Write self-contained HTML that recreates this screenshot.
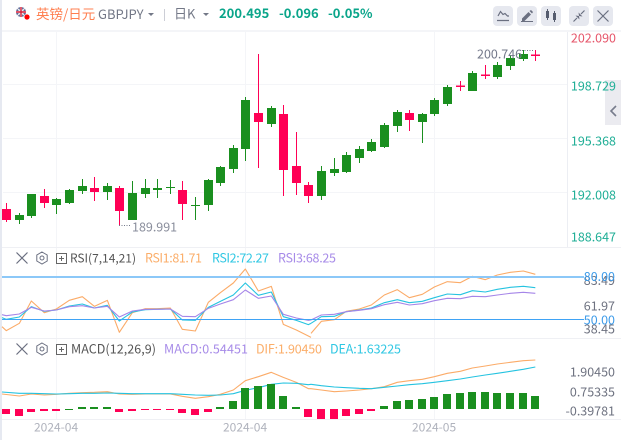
<!DOCTYPE html>
<html><head><meta charset="utf-8"><style>
html,body{margin:0;padding:0;background:#fff;width:621px;height:440px;overflow:hidden}
svg{display:block}
text{font-family:"Noto Sans CJK SC","Liberation Sans",sans-serif;font-size:12px}
.b{font-weight:700;font-size:13px;fill:#0aa58a}
.ax{text-anchor:end}
.l{fill:none;vector-effect:non-scaling-stroke;stroke-width:1.1;stroke-linejoin:round}
.o{stroke:#fbab68}.c{stroke:#25c3e0}.p{stroke:#a585e8}
.ic{fill:none;stroke:#6a6f80;stroke-width:1.2}
</style></head><body>
<svg width="621" height="440" viewBox="0 0 621 440" xmlns="http://www.w3.org/2000/svg">
<rect width="621" height="440" fill="#fff"/>
<rect x="0" y="0" width="2" height="440" fill="#e6e9f1"/>
<!-- grid -->
<g fill="#f4f5f8" shape-rendering="crispEdges">
<rect x="2" y="30" width="619" height="2"/>
<rect x="3" y="84" width="564" height="1"/><rect x="3" y="138" width="564" height="1"/><rect x="3" y="192" width="564" height="1"/>
<rect x="56" y="32" width="1" height="387"/><rect x="245" y="32" width="1" height="387"/><rect x="434" y="32" width="1" height="387"/>
<rect x="567" y="32" width="1" height="215" fill="#eceef3"/>
<rect x="2" y="247" width="619" height="1" fill="#eff0f4"/>
<rect x="2" y="338" width="619" height="1" fill="#eff0f4"/>
<rect x="2" y="419" width="619" height="1" fill="#eff0f4"/>
</g>
<!-- header -->
<circle cx="21" cy="12" r="5" fill="#2b3a7a"/>
<path d="M17 8l8 8M25 8l-8 8" stroke="#eee" stroke-width="1.4"/>
<path d="M21 7v10M16 12h10" stroke="#e8e8e8" stroke-width="2.6"/>
<path d="M21 7v10M16 12h10" stroke="#d8203c" stroke-width="1.4"/>
<circle cx="27" cy="17" r="2.6" fill="#f00"/>
<text x="36" y="19" style="font-size:13.5px" fill="#ff7f50">英镑/日元</text>
<text x="98" y="19" style="font-size:13px" fill="#737887">GBPJPY</text>
<path d="M148 13h6l-3 3z" fill="#737887"/>
<rect x="164" y="9" width="1" height="12" fill="#ccced6"/>
<text x="174" y="18.500" style="font-size:13px" fill="#737887">日K</text>
<path d="M203 13h6l-3 3z" fill="#737887"/>
<text x="219" y="18" class="b">200.495</text>
<text x="279" y="18" class="b">-0.096</text>
<text x="328" y="18" class="b">-0.05%</text>
<!-- toolbar -->
<g fill="#e6e8ef"><rect x="493" y="6" width="20" height="20" rx="4"/><rect x="517" y="6" width="20" height="20" rx="4"/><rect x="541" y="6" width="20" height="20" rx="4"/><rect x="569" y="6" width="20" height="20" rx="4"/><rect x="593" y="6" width="20" height="20" rx="4"/></g>
<path class="ic" d="M498 16l2.500-4.500 2.500 3 2-1 2.500 2.500h1.500M497 20.500h12"/>
<path d="M522 18.500l6.500-6.500 2.500 2.500-6.500 6.500h-2.500z" fill="#6a6f80"/><path d="M529.500 11l1.500-1 2 2-1 1.500z" fill="#6a6f80"/><path d="M521 21.500h12" stroke="#6a6f80" fill="none"/>
<path d="M546 11h3v7h-3zM553 13h3v7h-3z" fill="#555c6e"/><path d="M547.500 9v11M554.500 11v11" stroke="#555c6e" fill="none"/>
<path class="ic" d="M573.500 21.500l3.500-3.500M584.500 10.500l-3.500 3.500"/><path d="M575.500 15.500l3.500 .5 .5 3.500zM582.500 16.500l-3.500-.5-.5-3.500z" fill="#6a6f80"/>
<path class="ic" d="M597.500 10.500l11 11M608.500 10.500l-11 11"/>
<!-- candles -->
<path shape-rendering="crispEdges" fill="#1a8f1f" d="M15 215h9v5h-9zM19 213h1v11h-1zM27 194h9v22h-9zM31 194h1v24h-1zM52 199h9v6h-9zM56 198h1v16h-1zM65 190h9v13h-9zM69 189h1v15h-1zM78 186h9v5h-9zM82 179h1v15h-1zM103 186h9v6h-9zM107 183h1v17h-1zM128 193h9v27h-9zM132 181h1v39h-1zM141 188h9v6h-9zM145 179h1v19h-1zM153 188h9v2h-9zM157 179h1v19h-1zM166 187h9v1h-9zM170 180h1v14h-1zM191 205h9v1h-9zM195 197h1v23h-1zM204 180h9v25h-9zM208 179h1v32h-1zM216 167h9v16h-9zM220 166h1v20h-1zM229 148h9v21h-9zM233 145h1v28h-1zM241 100h9v49h-9zM245 97h1v64h-1zM267 108h9v16h-9zM271 106h1v21h-1zM317 171h9v25h-9zM321 166h1v34h-1zM330 169h9v4h-9zM334 158h1v18h-1zM342 155h9v17h-9zM346 152h1v21h-1zM355 149h9v9h-9zM359 146h1v17h-1zM367 142h9v9h-9zM371 139h1v13h-1zM380 125h9v22h-9zM384 123h1v25h-1zM393 112h9v14h-9zM397 110h1v22h-1zM418 114h9v8h-9zM422 113h1v30h-1zM430 100h9v14h-9zM434 98h1v18h-1zM443 87h9v17h-9zM447 85h1v21h-1zM468 73h9v18h-9zM472 71h1v20h-1zM493 65h9v12h-9zM497 62h1v17h-1zM506 58h9v8h-9zM510 55h1v15h-1zM519 54h9v5h-9zM523 50h1v11h-1z"/>
<path shape-rendering="crispEdges" fill="#ff0055" d="M2 209h9v11h-9zM6 203h1v19h-1zM40 196h9v7h-9zM44 189h1v19h-1zM90 188h9v4h-9zM94 177h1v24h-1zM115 188h9v23h-9zM119 186h1v40h-1zM178 190h9v14h-9zM182 181h1v39h-1zM254 113h9v9h-9zM258 54h1v114h-1zM279 114h9v56h-9zM283 105h1v91h-1zM292 166h9v17h-9zM296 132h1v63h-1zM304 185h9v11h-9zM308 182h1v21h-1zM405 113h9v7h-9zM409 110h1v21h-1zM456 85.500h9v1.500h-9zM460 81h1v10h-1zM481 74.500h9v1.500h-9zM485 65h1v14h-1zM531 54.500h9v1.500h-9zM535 50h1v11h-1z"/>
<!-- price labels -->
<text x="477" y="58.500" fill="#73788a" style="font-size:12.500px">200.746</text>
<path d="M522 50.500h11" stroke="#73788a" stroke-dasharray="1 1.500"/>
<text x="132" y="231.500" fill="#8a8e9c" style="font-size:12.500px">189.991</text>
<path d="M119 225.500h12" stroke="#73788a" stroke-dasharray="1 1.500"/>
<!-- side widget -->
<rect x="605" y="80" width="16" height="45" fill="#ebebf0"/>
<path d="M616 106l-5 5 5 5" fill="none" stroke="#777c8c" stroke-width="1.600"/>
<!-- axis main -->
<text class="ax" x="616" y="42.500" fill="#e6556a" style="font-size:12.500px">202.090</text>
<text class="ax" x="616" y="90.500" fill="#1fae96" style="font-size:12.500px">198.729</text>
<text class="ax" x="616" y="145.500" fill="#1fae96" style="font-size:12.500px">195.368</text>
<text class="ax" x="616" y="199.500" fill="#1fae96" style="font-size:12.500px">192.008</text>
<text class="ax" x="616" y="241.500" fill="#1fae96" style="font-size:12.500px">188.647</text>
<!-- RSI pane -->
<path class="ic" d="M16.500 252.500l11 11M27.500 252.500l-11 11" stroke-width="1"/>
<path class="ic" d="M42 252l5.200 3v6l-5.200 3-5.200-3v-6z" style="stroke-width:1"/><circle class="ic" cx="42" cy="258" r="2" style="stroke-width:1"/>
<rect x="56.500" y="253.500" width="10" height="10" fill="none" stroke="#666"/><path d="M59 258.500h5M61.500 256v5" stroke="#666" fill="none"/>
<text x="70" y="262.500" fill="#555" style="font-size:12px" textLength="66">RSI(7,14,21)</text>
<text x="145" y="262.500" fill="#fbae6a" style="font-size:12.500px" textLength="57">RSI1:81.71</text>
<text x="212" y="262.500" fill="#2fc7e3" style="font-size:12.500px" textLength="57">RSI2:72.27</text>
<text x="278" y="262.500" fill="#a78be8" style="font-size:12.500px" textLength="58">RSI3:68.25</text>
<g transform="translate(0,240) scale(.33333)">
<polyline class="l o" points="6,260 19,272 58,250 94,183 133,218 169,207 208,181 247,170 283,199 322,181 358,277 397,218 436,206 472,206 511,204 547,268 586,273 625,187 661,158 700,129 736,87 775,153 814,139 850,253 889,270 925,288 933,292"/>
<polyline class="l c" points="6,233 19,238 58,231 94,200 133,214 169,210 208,198 247,192 283,204 322,196 358,243 397,216 436,209 472,208 511,207 547,240 586,241 625,202 661,184 700,165 736,129 775,166 814,156 850,230 889,241 925,254 933,250"/>
<polyline class="l p" points="6,224 19,227 58,222 94,202 133,213 169,210 208,200 247,197 283,204 322,199 358,231 397,213 436,208 472,208 511,207 547,229 586,230 625,205 661,192 700,179 736,150 775,175 814,168 850,223 889,234 925,241 933,240"/>
</g>
<g transform="translate(311,240) scale(.33333)">
<polyline class="l o" points="0,280 31,244 70,239 106,214 145,207 181,195 220,165 259,149 295,173 334,163 370,141 409,125 448,128 484,109 523,119 559,105 598,97 637,93 673,103"/>
<polyline class="l c" points="0,250 31,230 70,229 106,215 145,210 181,204 220,188 259,179 295,188 334,184 370,173 409,162 448,164 484,152 523,156 559,148 598,142 637,139 673,143"/>
<polyline class="l p" points="0,240 31,225 70,223 106,215 145,211 181,206 220,194 259,187 295,195 334,191 370,182 409,175 448,176 484,169 523,170 559,165 598,160 637,157 673,160"/>
</g>
<rect x="2" y="276" width="582" height="2" fill="#8cc8f8" shape-rendering="crispEdges"/>
<rect x="2" y="319" width="582" height="1" fill="#3fa3f5" shape-rendering="crispEdges"/>
<text class="ax" x="615" y="285" fill="#6e7280" style="font-size:12.500px">83.49</text>
<text class="ax" x="615" y="310.500" fill="#6e7280" style="font-size:12.500px">61.97</text>
<text class="ax" x="615" y="333.500" fill="#6e7280" style="font-size:12.500px">38.45</text>
<text class="ax" x="615" y="281" fill="#3d9be9" style="font-size:12.500px">80.00</text>
<text class="ax" x="615" y="324.500" fill="#3d9be9" style="font-size:12.500px">50.00</text>
<!-- MACD pane -->
<path class="ic" d="M16.500 343.500l11 11M27.500 343.500l-11 11" stroke-width="1"/>
<path class="ic" d="M42 343l5.200 3v6l-5.200 3-5.200-3v-6z" style="stroke-width:1"/><circle class="ic" cx="42" cy="349" r="2" style="stroke-width:1"/>
<rect x="56.500" y="344.500" width="10" height="10" fill="none" stroke="#666"/><path d="M59 349.500h5M61.500 347v5" stroke="#666" fill="none"/>
<text x="71" y="353.500" fill="#555" style="font-size:12.500px" textLength="85">MACD(12,26,9)</text>
<text x="164" y="353.500" fill="#a78be8" style="font-size:12.500px" textLength="84">MACD:0.54451</text>
<text x="256" y="353.500" fill="#fbae6a" style="font-size:12.500px" textLength="66">DIF:1.90450</text>
<text x="330" y="353.500" fill="#2fc7e3" style="font-size:12.500px" textLength="71">DEA:1.63225</text>
<g transform="translate(0,340) scale(.33333)">
<polyline class="l o" points="6,162 58,168 94,162 133,165 169,163 208,160 247,158 283,157 322,155 358,162 397,163 436,162 472,162 511,162 547,169 586,175 625,170 661,163 700,150 736,122 775,110 814,97 850,112 889,127 925,146 933,146"/>
<polyline class="l c" points="6,156 58,160 94,160 133,161 169,162 208,161 247,160 283,160 322,159 358,160 397,161 436,161 472,161 511,161 547,163 586,165 625,166 661,165 700,161 736,151 775,143 814,133 850,129 889,130 925,134 933,133"/>
</g>
<g transform="translate(311,340) scale(.33333)">
<polyline class="l o" points="0,146 31,150 70,155 106,153 145,150 181,146 220,140 259,127 295,122 334,118 370,110 409,100 448,94 484,84 523,78 559,72 598,67 637,62 673,60"/>
<polyline class="l c" points="0,133 31,137 70,141 106,143 145,145 181,146 220,142 259,138 295,134 334,131 370,127 409,122 448,117 484,111 523,105 559,100 598,94 637,88 673,81"/>
</g>
<path shape-rendering="crispEdges" fill="#ff0055" d="M2 409h8v5h-8zM15 409h8v7h-8zM27 409h8v3h-8zM40 409h8v2h-8zM52 409h8v2h-8zM115 409h8v3h-8zM128 409h8v2h-8zM141 409h8v1h-8zM153 409h8v1h-8zM166 409h8v1h-8zM178 409h8v4h-8zM191 409h8v6h-8zM204 409h8v3h-8zM304 409h8v8h-8zM317 409h8v10h-8zM330 409h8v10h-8zM342 409h8v7h-8zM355 409h8v5h-8zM367 409h8v2h-8z"/>
<path shape-rendering="crispEdges" fill="#1a8f1f" d="M65 409h8v1h-8zM78 407h8v2h-8zM90 407h8v2h-8zM103 407h8v2h-8zM216 407h8v2h-8zM229 401h8v8h-8zM241 388h8v21h-8zM254 386h8v23h-8zM267 384h8v25h-8zM279 396h8v13h-8zM292 407h8v2h-8zM380 406h8v3h-8zM393 401h8v8h-8zM405 400h8v9h-8zM418 399h8v10h-8zM430 397h8v12h-8zM443 394h8v15h-8zM456 393h8v16h-8zM468 392h8v17h-8zM481 392h8v17h-8zM493 393h8v16h-8zM506 393h8v16h-8zM519 393h8v16h-8zM531 396h8v13h-8z"/>
<text class="ax" x="615" y="376.500" fill="#6e7280" style="font-size:12.500px">1.90450</text>
<text class="ax" x="615" y="396.500" fill="#6e7280" style="font-size:12.500px">0.75335</text>
<text class="ax" x="615" y="415.500" fill="#6e7280" style="font-size:12.500px">-0.39781</text>
<!-- dates -->
<text x="34" y="431.500" fill="#b0b3bd" style="font-size:12px">2024-04</text>
<text x="223" y="431.500" fill="#b0b3bd" style="font-size:12px">2024-04</text>
<text x="412" y="431.500" fill="#b0b3bd" style="font-size:12px">2024-05</text>
</svg>
</body></html>
